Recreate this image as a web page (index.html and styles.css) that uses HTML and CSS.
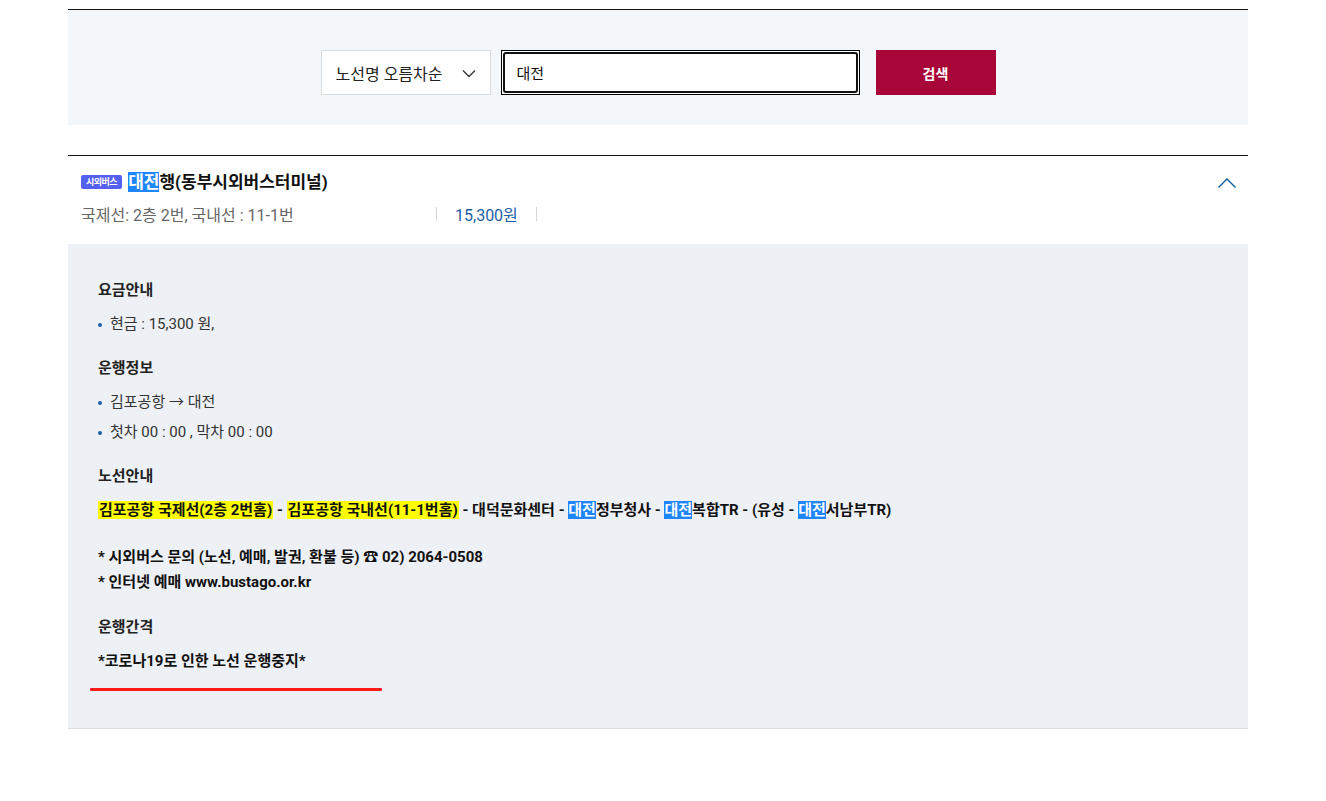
FILE: index.html
```html
<!DOCTYPE html>
<html lang="ko">
<head>
<meta charset="utf-8">
<title>노선 검색</title>
<link rel="stylesheet" href="styles.css">
</head>
<body>
<div class="wrap">
  <section class="search">
    <div class="select">
      <span>노선명 오름차순</span>
      <svg class="sel-arrow" width="14" height="9" viewBox="0 0 14 9"><path d="M1 1.5 L7 7.5 L13 1.5" fill="none" stroke="#333" stroke-width="1.3"/></svg>
    </div>
    <div class="input-outer"><div class="input-inner">대전</div></div>
    <button class="btn">검색</button>
  </section>

  <section class="item">
    <div class="item-head">
      <div class="title-row">
        <span class="badge">시외버스</span>
        <h2 class="title"><span class="hl-blue">대전</span>행(동부시외버스터미널)</h2>
      </div>
      <div class="sub-row">
        <span class="sub-info">국제선: 2층 2번, 국내선 : 11-1번</span>
        <span class="sep"></span>
        <span class="price">15,300원</span>
        <span class="sep"></span>
      </div>
      <svg class="toggle" width="20" height="12" viewBox="0 0 20 12"><path d="M1.5 10.5 L10 2 L18.5 10.5" fill="none" stroke="#0b5aa6" stroke-width="1.4"/></svg>
    </div>

    <div class="panel">
      <h3 class="ph">요금안내</h3>
      <ul class="blist">
        <li>현금 : 15,300 원,</li>
      </ul>

      <h3 class="ph">운행정보</h3>
      <ul class="blist">
        <li>김포공항 → 대전</li>
        <li>첫차 00 : 00 , 막차 00 : 00</li>
      </ul>

      <h3 class="ph">노선안내</h3>
      <p class="route"><span class="hl-y">김포공항 국제선(2층 2번홈)</span> - <span class="hl-y">김포공항 국내선(11-1번홈)</span> - 대덕문화센터 - <span class="hl-blue">대전</span>정부청사 - <span class="hl-blue">대전</span>복합TR - (유성 - <span class="hl-blue">대전</span>서남부TR)</p>

      <p class="notice">* 시외버스 문의 (노선, 예매, 발권, 환불 등) ☎ 02) 2064-0508<br>* 인터넷 예매 www.bustago.or.kr</p>

      <h3 class="ph">운행간격</h3>
      <p class="stop">*코로나19로 인한 노선 운행중지*</p>
      <div class="redline"></div>
    </div>
  </section>
</div>
</body>
</html>
```

FILE: styles.css
```css
* { box-sizing: border-box; }
html, body { margin: 0; padding: 0; background: #fff; }
body {
  font-family: Roboto, "Noto Sans CJK KR", "Noto Sans", sans-serif;
  color: #222;
}
.wrap {
  width: 1180px;
  margin-left: 68px;
  padding-top: 9px;
}

/* search */
.search {
  border-top: 1px solid #111;
  background: #f4f7fa;
  height: 116px;
  padding-top: 40px;
  display: flex;
  justify-content: center;
  align-items: flex-start;
}
.select {
  width: 170px;
  height: 45px;
  background: #fff;
  border: 1px solid #d9dcdf;
  display: flex;
  align-items: center;
  justify-content: space-between;
  padding: 0 14px 0 14px;
  font-size: 16px;
  color: #222;
}
.sel-arrow { margin-top: 1px; }
.input-outer {
  margin-left: 10px;
  width: 359px;
  height: 45px;
  border: 1px solid #000;
  background: #fff;
  padding: 1px;
}
.input-inner {
  height: 100%;
  border: 2px solid #111;
  border-radius: 3px;
  display: flex;
  align-items: center;
  padding-left: 12px;
  font-size: 15px;
  color: #111;
}
.btn {
  margin-left: 16px;
  width: 120px;
  height: 45px;
  border: 0;
  background: #a80638;
  color: #fff;
  font-family: inherit;
  font-size: 14px;
  font-weight: 700;
  padding: 0;
}

/* item */
.item {
  margin-top: 30px;
  border-top: 1px solid #111;
}
.item-head {
  position: relative;
  padding: 13px 13px 0 13px;
  height: 88px;
}
.title-row {
  display: flex;
  align-items: center;
  height: 26px;
}
.badge {
  display: inline-block;
  background: #5460f0;
  color: #fff;
  font-size: 9px;
  font-weight: 700;
  line-height: 14px;
  height: 14px;
  padding: 0 5px;
  border-radius: 2px;
  margin-right: 6px;
  letter-spacing: -0.5px;
}
.title {
  margin: 0;
  font-size: 17px;
  font-weight: 700;
  color: #111;
  line-height: 26px;
}
.hl-blue {
  background: #1f85ff;
  color: #fff;
}
.sub-row {
  display: flex;
  align-items: center;
  height: 22px;
  margin-top: 8px;
}
.sub-info {
  width: 355px;
  font-size: 16px;
  color: #666;
}
.sep {
  width: 1px;
  height: 14px;
  background: #d5d5d5;
}
.price {
  width: 99px;
  padding-left: 18px;
  font-size: 16px;
  color: #1d5ea6;
}
.toggle {
  position: absolute;
  right: 11px;
  top: 21px;
}

/* panel */
.panel {
  background: #edf0f5;
  border-bottom: 1px solid #dadde3;
  padding: 34px 30px 37px 30px;
}
.ph {
  margin: 0;
  font-size: 15px;
  font-weight: 700;
  color: #222;
  line-height: 24px;
}
.blist {
  list-style: none;
  margin: 12px 0 22px 0;
  padding: 0;
}
.blist li {
  position: relative;
  padding-left: 12px;
  font-size: 15px;
  color: #333;
  line-height: 20px;
}
.blist li + li { margin-top: 10px; }
.blist li::before {
  content: "";
  position: absolute;
  left: 0;
  top: 9px;
  width: 4px;
  height: 4px;
  border-radius: 50%;
  background: #1d5ea6;
}
.route {
  margin: 12px 0 0 0;
  font-size: 15px;
  font-weight: 700;
  color: #111;
  line-height: 20px;
}
.hl-y { background: #ffff00; padding: 0 1px; }
.notice {
  margin: 25px 0 20px 0;
  font-size: 15px;
  font-weight: 700;
  color: #111;
  line-height: 25px;
}
.stop {
  margin: 12px 0 0 0;
  font-size: 15px;
  font-weight: 700;
  color: #111;
  line-height: 20px;
}
.redline {
  margin: 17px 0 0 -8px;
  width: 292px;
  height: 3px;
  background: #ff1a1a;
  border-radius: 1px;
}
```
